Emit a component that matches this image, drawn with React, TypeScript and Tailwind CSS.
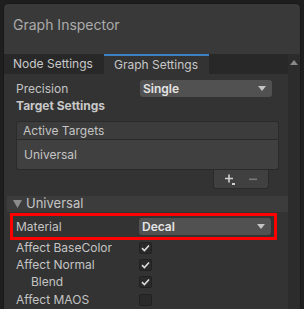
import React from "react";

const font = { fontFamily: "Inter, 'Noto Sans', sans-serif" };

function Check() {
  return (
    <svg width="9" height="8" viewBox="0 0 9 8">
      <path d="M1 4.2 L3.4 6.5 L8 1.5" stroke="#dcdcdc" strokeWidth="1.6" fill="none" />
    </svg>
  );
}

function Checkbox({ checked }: { checked: boolean }) {
  return (
    <div className="w-[13px] h-[12px] rounded-[2px] bg-[#2a2a2a] border border-[#212121] flex items-center justify-center">
      {checked && <Check />}
    </div>
  );
}

function Dropdown({ value }: { value: string }) {
  return (
    <div className="w-[132px] h-[17px] rounded-[3px] bg-[#515151] flex items-center justify-between pl-[3px] pr-[6px]">
      <span className="text-[12px] font-semibold text-[#e4e4e4] leading-none">{value}</span>
      <svg width="8" height="5" viewBox="0 0 8 5">
        <path d="M0 0 H8 L4 5 Z" fill="#c4c4c4" />
      </svg>
    </div>
  );
}

function CheckRow({ label, checked, indent }: { label: string; checked: boolean; indent?: boolean }) {
  return (
    <div className="h-[17.3px] flex items-center">
      <div className={`w-[123px] text-[12px] text-[#c4c4c4] ${indent ? "pl-[15px]" : ""}`}>{label}</div>
      <Checkbox checked={checked} />
    </div>
  );
}

export default function App() {
  return (
    <div className="w-[304px] h-[309px] bg-[#1e1e1e] overflow-hidden pt-[3px] px-[3px]" style={font}>
      <div className="h-[310px] rounded-t-[5px] border border-[#191919] bg-[#393939] flex flex-col overflow-hidden">
        <div className="h-[50px] shrink-0 pl-[9px] pt-[10px] text-[14px] text-[#ababab]">Graph Inspector</div>
        <div className="flex flex-1">
          <div className="flex-1 flex flex-col bg-[#333333]">
            <div className="h-[20px] flex bg-[#282828] text-[12px] text-[#c8c8c8]">
              <div className="w-[100px] pl-[9px] flex items-center">Node Settings</div>
              <div className="w-[105px] bg-[#333333] border-t-2 border-[#3d80c4] pl-[10px] flex items-center">Graph Settings</div>
            </div>
            <div className="mt-[6px] pl-[12px] pr-[16px] h-[17px] flex items-center justify-between">
              <span className="text-[12px] text-[#c4c4c4]">Precision</span>
              <Dropdown value="Single" />
            </div>
            <div className="pl-[12px] h-[18px] flex items-center text-[12px] font-bold text-[#c8c8c8]">Target Settings</div>
            <div className="ml-[12px] mr-[9px] mt-[6px]">
              <div className="h-[19px] rounded-t-[3px] border border-[#2a2a2a] bg-[#3c3c3c] pl-[6px] flex items-center text-[12px] text-[#c4c4c4]">
                Active Targets
              </div>
              <div className="h-[30px] rounded-b-[3px] border border-t-0 border-[#2a2a2a] bg-[#404040] pl-[7px] flex items-center text-[12px] text-[#c4c4c4]">
                Universal
              </div>
              <div className="flex justify-end pr-[10px]">
                <div className="w-[56px] h-[19px] rounded-b-[3px] border border-t-0 border-[#2a2a2a] bg-[#404040] flex items-center justify-center gap-[13px] pt-[1px]">
                  <svg width="11" height="11" viewBox="0 0 11 11">
                    <path d="M0 4.5 H8 M4 0.5 V8.5" stroke="#d0d0d0" strokeWidth="1.6" />
                    <rect x="7" y="9" width="3" height="2" fill="#d0d0d0" />
                  </svg>
                  <svg width="8" height="3" viewBox="0 0 8 3">
                    <rect x="0" y="0.5" width="8" height="1.6" fill="#7a7a7a" />
                  </svg>
                </div>
              </div>
            </div>
            <div className="mt-[7px] ml-[3px] h-[16px] bg-[#3c3c3c] flex items-center pl-[6px] text-[13px] text-[#c4c4c4]">
              <svg width="9" height="8" viewBox="0 0 9 8" className="mr-[4px]">
                <path d="M0 0 H9 L4.5 8 Z" fill="#8c8c8c" />
              </svg>
              Universal
            </div>
            <div className="mt-[1px] ml-[6px] mr-[11px] h-[27px] border-[3px] border-[#ff0000] flex items-center justify-between pl-[3px] pr-[3px]">
              <span className="text-[12px] text-[#c4c4c4]">Material</span>
              <Dropdown value="Decal" />
            </div>
            <div className="pl-[12px] -mt-[1px]">
              <CheckRow label="Affect BaseColor" checked />
              <CheckRow label="Affect Normal" checked />
              <CheckRow label="Blend" checked indent />
              <CheckRow label="Affect MAOS" checked={false} />
            </div>
          </div>
          <div className="w-[12px] bg-[#2c2c2c] flex justify-center pt-[6px]">
            <svg width="8" height="5" viewBox="0 0 8 5">
              <path d="M0 5 H8 L4 0 Z" fill="#8a8a8a" />
            </svg>
          </div>
        </div>
      </div>
    </div>
  );
}
